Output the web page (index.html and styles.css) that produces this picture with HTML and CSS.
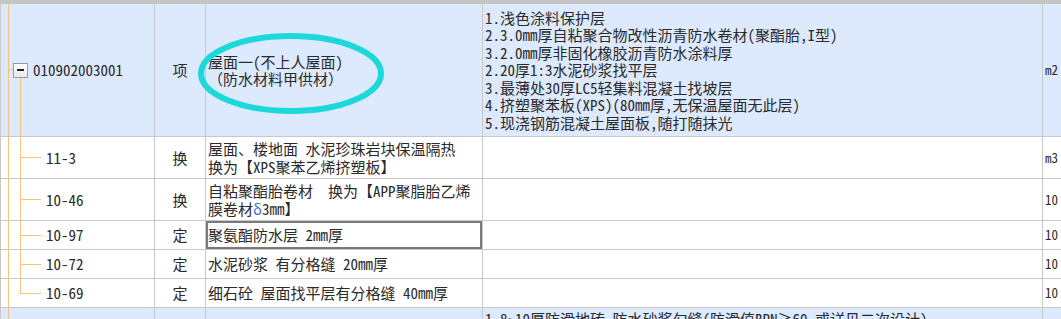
FILE: index.html
```html
<!DOCTYPE html>
<html lang="zh-CN">
<head>
<meta charset="utf-8">
<title>分部分项清单</title>
<link rel="stylesheet" href="styles.css">
</head>
<body>
<div class="sheet">
  <div class="topbar"></div>
  <div class="grid">
    <div class="cell tree tree-parent blue"><span class="toggle"></span><span class="code">010902003001</span></div>
    <div class="cell type blue">项</div>
    <div class="cell name blue"><div class="txt">屋面一(不上人屋面)<br>（防水材料甲供材）</div></div>
    <div class="cell desc blue"><div class="txt">1.浅色涂料保护层<br>2.3.0mm厚自粘聚合物改性沥青防水卷材(聚酯胎,I型)<br>3.2.0mm厚非固化橡胶沥青防水涂料厚<br>2.20厚1:3水泥砂浆找平层<br>3.最薄处30厚LC5轻集料混凝土找坡层<br>4.挤塑聚苯板(XPS)(80mm厚,无保温屋面无此层)<br>5.现浇钢筋混凝土屋面板,随打随抹光</div></div>
    <div class="cell unit blue">m2</div>

    <div class="cell tree tree-child"><span class="code">11-3</span></div>
    <div class="cell type">换</div>
    <div class="cell name"><div class="txt">屋面、楼地面 水泥珍珠岩块保温隔热<br>换为【XPS聚苯乙烯挤塑板】</div></div>
    <div class="cell desc"></div>
    <div class="cell unit">m3</div>

    <div class="cell tree tree-child"><span class="code">10-46</span></div>
    <div class="cell type">换</div>
    <div class="cell name"><div class="txt">自粘聚酯胎卷材&nbsp;&nbsp;换为【APP聚脂胎乙烯<br>膜卷材<span class="delta">δ</span>3mm】</div></div>
    <div class="cell desc"></div>
    <div class="cell unit">10</div>

    <div class="cell tree tree-child"><span class="code">10-97</span></div>
    <div class="cell type">定</div>
    <div class="cell name sel"><div class="txt">聚氨酯防水层 2mm厚</div></div>
    <div class="cell desc"></div>
    <div class="cell unit">10</div>

    <div class="cell tree tree-child"><span class="code">10-72</span></div>
    <div class="cell type">定</div>
    <div class="cell name"><div class="txt">水泥砂浆 有分格缝 20mm厚</div></div>
    <div class="cell desc"></div>
    <div class="cell unit">10</div>

    <div class="cell tree tree-child last"><span class="code">10-69</span></div>
    <div class="cell type">定</div>
    <div class="cell name"><div class="txt">细石砼 屋面找平层有分格缝 40mm厚</div></div>
    <div class="cell desc"></div>
    <div class="cell unit">10</div>

    <div class="cell tree tree-cont blue top"></div>
    <div class="cell type blue top"></div>
    <div class="cell name blue top"></div>
    <div class="cell desc blue top"><div class="txt">1.8~10厚防滑地砖,防水砂浆勾缝(防滑值BPN≥60,或详见二次设计)</div></div>
    <div class="cell unit blue top"></div>
  </div>
  <svg class="mark" width="186" height="81" viewBox="0 0 186 81" aria-hidden="true">
    <ellipse cx="93" cy="40.5" rx="90" ry="37.5" fill="none" stroke="#1cd8d9" stroke-width="6"/>
  </svg>
</div>
</body>
</html>
```

FILE: styles.css
```css
* {
  box-sizing: border-box;
}

html,
body {
  margin: 0;
  padding: 0;
  background: #ffffff;
  overflow: hidden;
}

body {
  font-family: "Noto Sans Mono CJK SC", "Noto Sans CJK SC", "DejaVu Sans Mono", monospace;
  font-size: 15px;
  color: #2a2a2a;
}

.sheet {
  position: relative;
  width: 1061px;
  height: 319px;
  overflow: hidden;
}

.topbar {
  height: 4px;
  background: #c4c4c4;
}

.grid {
  display: grid;
  grid-template-columns: 153px 50px 276px 559px 80px;
  grid-template-rows: 132px 41px 41px 28px 28px 28px 40px;
  gap: 1px;
  padding-left: 1px;
  background: #c8c8c8;
  width: max-content;
}

.cell {
  background-color: #ffffff;
  display: flex;
  align-items: center;
  line-height: 17.5px;
  white-space: nowrap;
  overflow: hidden;
}

.cell.blue {
  background-color: #dde9fc;
}

.cell.top {
  align-items: flex-start;
  padding-top: 2px;
}

.type {
  justify-content: center;
}

.name {
  padding-left: 2px;
}

.desc {
  padding-left: 2px;
}

.unit {
  padding-left: 2px;
  font-size: 13px;
}

.delta {
  color: #3f6fc0;
}

.sel {
  box-shadow: inset 0 0 0 2px #7a7a7a;
}

/* tree connectors */
.tree {
  background-repeat: no-repeat;
}

.tree-parent {
  padding-left: 12px;
  background-image:
    linear-gradient(#f7c37c, #f7c37c),
    linear-gradient(#f7c37c, #f7c37c),
    linear-gradient(#f7c37c, #f7c37c);
  background-size: 1px 100%, 5px 1px, 1px 59px;
  background-position: 7px 0, 7px 65px, 19px 100%;
}

.tree-child {
  padding-left: 45px;
  background-image:
    linear-gradient(#f7c37c, #f7c37c),
    linear-gradient(#f7c37c, #f7c37c),
    linear-gradient(#f7c37c, #f7c37c);
  background-size: 1px 100%, 1px 100%, 21px 1px;
  background-position: 7px 0, 19px 0, 19px 50%;
}

.tree-child.last {
  background-size: 1px 100%, 1px 50%, 21px 1px;
}

.tree-cont {
  background-image: linear-gradient(#f7c37c, #f7c37c);
  background-size: 1px 100%;
  background-position: 7px 0;
}

.toggle {
  position: relative;
  flex: none;
  width: 15px;
  height: 15px;
  margin-right: 5px;
  border: 1px solid #9c9c9c;
  background: linear-gradient(#ffffff, #e8e8e8);
}

.toggle::before {
  content: "";
  position: absolute;
  left: 3px;
  right: 3px;
  top: 5px;
  height: 2px;
  background: #222222;
}

.mark {
  position: absolute;
  left: 198px;
  top: 33px;
}
```
